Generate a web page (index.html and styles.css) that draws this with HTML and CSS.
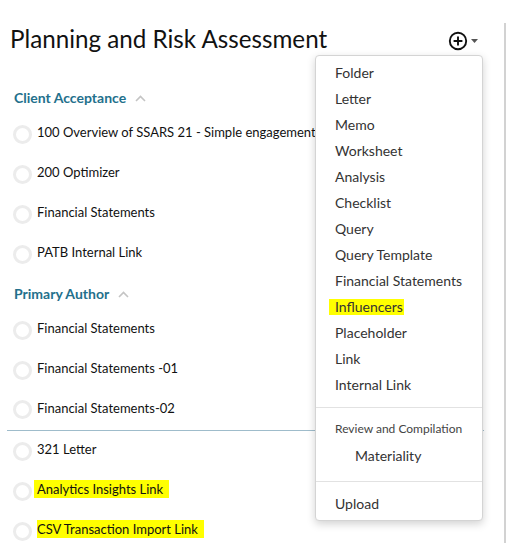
FILE: index.html
```html
<!DOCTYPE html>
<html>
<head>
<meta charset="utf-8">
<link rel="stylesheet" href="styles.css">
</head>
<body>
<div class="page">
  <div class="panel">
    <div class="header">
      <h1 class="title">Planning and Risk Assessment</h1>
      <button class="add-btn" type="button">
        <svg width="20" height="20" viewBox="0 0 20 20" class="plus">
          <circle cx="10" cy="10" r="8.2" fill="none" stroke="#111" stroke-width="1.9"/>
          <path d="M10 5.6v8.8M5.6 10h8.8" stroke="#111" stroke-width="1.9"/>
        </svg>
        <svg width="7" height="4" viewBox="0 0 7 4" class="caret"><path d="M0 0h7L3.5 4z" fill="#555"/></svg>
      </button>
    </div>

    <div class="group group-first">
      <div class="group-head">
        <span class="group-name">Client Acceptance</span>
        <svg class="chev" width="11" height="7" viewBox="0 0 11 7"><path d="M1 6l4.5-4.5L10 6" fill="none" stroke="#c4c4c4" stroke-width="1.6"/></svg>
      </div>
      <div class="row"><span class="radio"></span><span class="label">100 Overview of SSARS 21 - Simple engagement</span></div>
      <div class="row"><span class="radio"></span><span class="label">200 Optimizer</span></div>
      <div class="row"><span class="radio"></span><span class="label">Financial Statements</span></div>
      <div class="row"><span class="radio"></span><span class="label">PATB Internal Link</span></div>
    </div>

    <div class="group">
      <div class="group-head">
        <span class="group-name">Primary Author</span>
        <svg class="chev" width="11" height="7" viewBox="0 0 11 7"><path d="M1 6l4.5-4.5L10 6" fill="none" stroke="#c4c4c4" stroke-width="1.6"/></svg>
      </div>
      <div class="row"><span class="radio"></span><span class="label">Financial Statements</span></div>
      <div class="row"><span class="radio"></span><span class="label">Financial Statements -01</span></div>
      <div class="row last"><span class="radio"></span><span class="label">Financial Statements-02</span></div>
      <div class="row"><span class="radio"></span><span class="label">321 Letter</span></div>
      <div class="row"><span class="radio"></span><span class="label"><span class="hl hl-a">Analytics Insights Link</span></span></div>
      <div class="row"><span class="radio"></span><span class="label"><span class="hl hl-b">CSV Transaction Import Link</span></span></div>
    </div>
  </div>

  <div class="menu">
    <ul class="menu-sec first">
      <li>Folder</li>
      <li>Letter</li>
      <li>Memo</li>
      <li>Worksheet</li>
      <li>Analysis</li>
      <li>Checklist</li>
      <li>Query</li>
      <li>Query Template</li>
      <li>Financial Statements</li>
      <li><span class="mark">Influencers</span></li>
      <li>Placeholder</li>
      <li>Link</li>
      <li>Internal Link</li>
    </ul>
    <div class="menu-sec second">
      <div class="menu-sub">Review and Compilation</div>
      <div class="menu-item indent">Materiality</div>
    </div>
    <div class="menu-sec third">
      <div class="menu-item">Upload</div>
    </div>
  </div>
</div>
</body>
</html>
```

FILE: styles.css
```css
* { box-sizing: border-box; }
html, body { margin: 0; padding: 0; background: #fff; }
body {
  font-family: Lato, "Open Sans", "Liberation Sans", sans-serif;
  color: #1a1a1a;
  width: 526px;
  height: 543px;
  overflow: hidden;
}
.page {
  position: relative;
  padding-top: 23px;
  height: 543px;
}
.panel {
  width: 506px;
  height: 520px;
  border-right: 2px solid #d2d2d2;
  padding-top: 1px;
}
.header {
  display: flex;
  align-items: center;
  justify-content: space-between;
  height: 29px;
  padding-left: 10px;
  padding-right: 26px;
}
.title {
  margin: 0;
  font-size: 24.2px;
  line-height: 29px;
  font-weight: 400;
  color: #111;
}
.add-btn {
  display: flex;
  align-items: center;
  gap: 3px;
  background: none;
  border: 0;
  padding: 0;
  margin-top: 5px;
}
.caret { margin-top: -1px; }

.group {
  width: 477px;
  margin-left: 7px;
}
.group.group-first { margin-top: 25px; }
.group-head {
  display: flex;
  align-items: center;
  gap: 9px;
  height: 36px;
  padding-left: 7px;
  padding-top: 4px;
}
.group-name {
  font-size: 14px;
  font-weight: 700;
  color: #23708c;
  line-height: 20px;
}

.row {
  display: flex;
  align-items: center;
  height: 40px;
  padding-left: 6px;
  gap: 5px;
}
.row.last {
  border-bottom: 1px solid #9fbccb;
  height: 41px;
  padding-bottom: 1px;
}
.radio {
  width: 19px;
  height: 19px;
  border-radius: 50%;
  border: 3px solid #ececec;
  flex: none;
}
.label {
  font-size: 13px;
  line-height: 18px;
  color: #111;
  white-space: nowrap;
  margin-bottom: 4px;
}
.hl {
  background: #ffff00;
  display: inline-block;
  line-height: 18px;
}
.hl-a { margin-left: -3px; padding: 0 6px 0 3px; }
.hl-b { padding: 0 6px 0 0; margin-top: -1px; }

.menu {
  position: absolute;
  left: 315px;
  top: 55px;
  width: 168px;
  height: 466px;
  background: #fff;
  border: 1px solid #d4d4d4;
  border-radius: 4px;
  box-shadow: 0 3px 8px rgba(0, 0, 0, 0.18);
  font-size: 14px;
  color: #333;
}
.menu-sec {
  margin: 0;
  padding: 0;
  list-style: none;
}
.menu-sec li, .menu-item {
  line-height: 26px;
  height: 26px;
  padding-left: 19px;
  white-space: nowrap;
}
.menu-sec.first { padding: 4px 0 9px; }
.menu-sec.second {
  border-top: 1px solid #e2e2e2;
  padding: 11px 0 12px;
}
.menu-sub {
  font-size: 12px;
  line-height: 20px;
  height: 20px;
  padding-left: 19px;
  margin-bottom: 4px;
  color: #444;
}
.menu-item.indent { padding-left: 39px; }
.menu-sec.third {
  border-top: 1px solid #e2e2e2;
  padding-top: 9px;
}
.mark {
  position: relative;
  z-index: 0;
}
.mark::before {
  content: "";
  position: absolute;
  left: -6px;
  right: -1px;
  top: 1px;
  height: 16px;
  background: #ffff00;
  z-index: -1;
}
```
